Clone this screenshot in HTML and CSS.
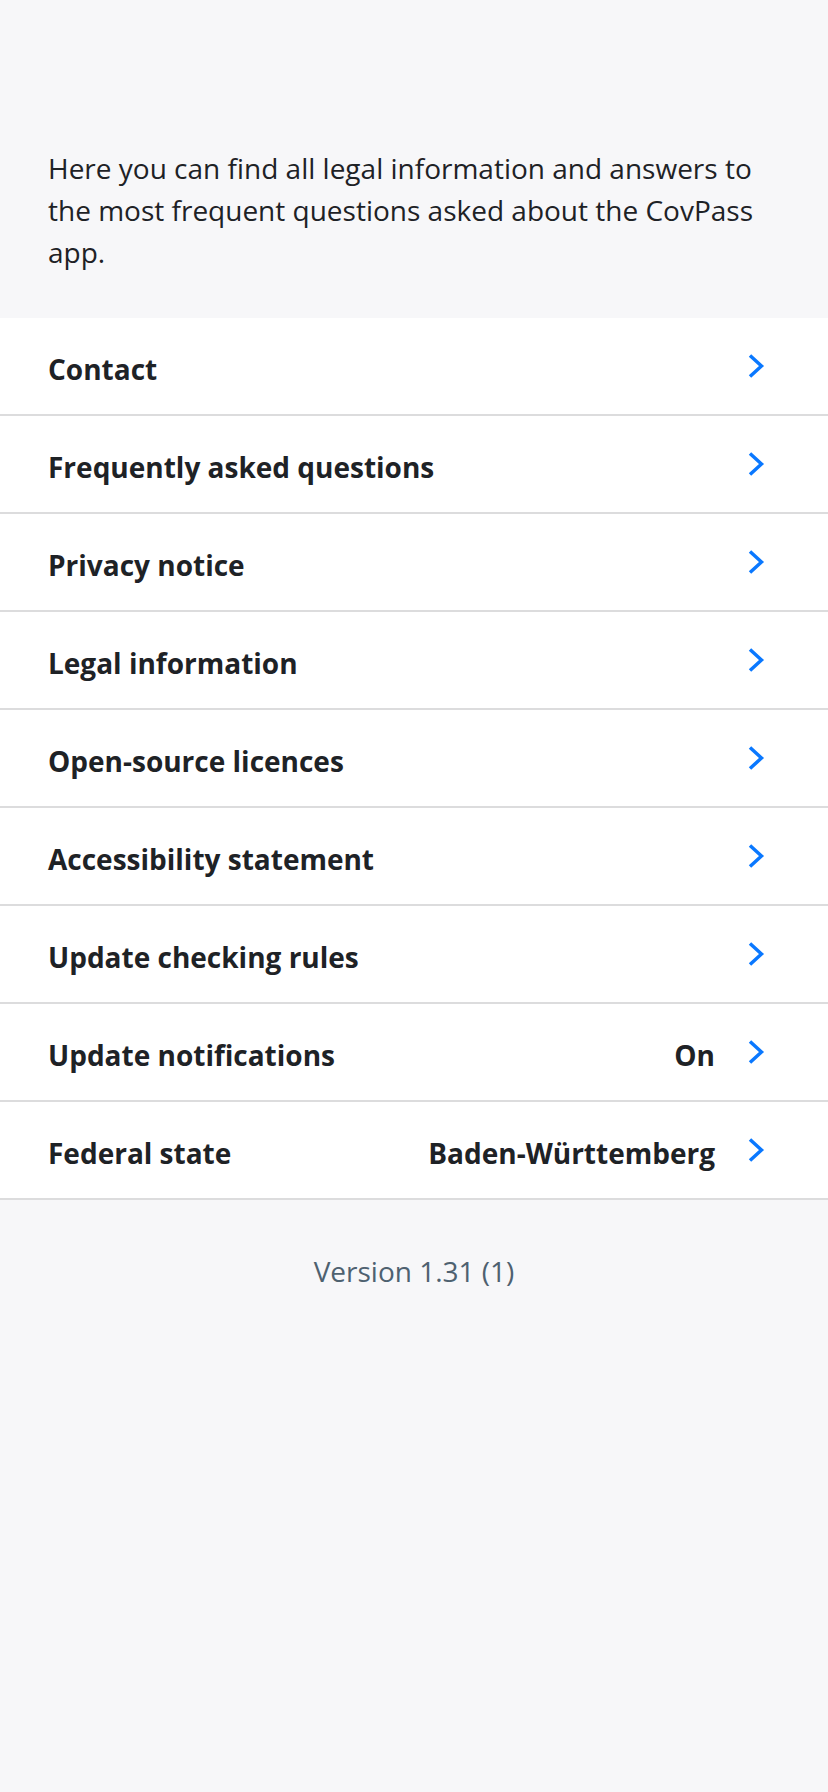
FILE: index.html
```html
<!DOCTYPE html>
<html lang="en">
<head>
<meta charset="utf-8">
<link rel="stylesheet" href="styles.css">
<title>Information</title>
</head>
<body>
<div class="page">
  <p class="intro">Here you can find all legal information and answers to the most frequent questions asked about the CovPass app.</p>
  <ul class="list">
    <li class="row"><span class="label">Contact</span><svg class="chev" viewBox="0 0 16 24"><path d="M2 1.5 L13.5 12 L2 22.5"/></svg></li>
    <li class="row"><span class="label">Frequently asked questions</span><svg class="chev" viewBox="0 0 16 24"><path d="M2 1.5 L13.5 12 L2 22.5"/></svg></li>
    <li class="row"><span class="label">Privacy notice</span><svg class="chev" viewBox="0 0 16 24"><path d="M2 1.5 L13.5 12 L2 22.5"/></svg></li>
    <li class="row"><span class="label">Legal information</span><svg class="chev" viewBox="0 0 16 24"><path d="M2 1.5 L13.5 12 L2 22.5"/></svg></li>
    <li class="row"><span class="label">Open-source licences</span><svg class="chev" viewBox="0 0 16 24"><path d="M2 1.5 L13.5 12 L2 22.5"/></svg></li>
    <li class="row"><span class="label">Accessibility statement</span><svg class="chev" viewBox="0 0 16 24"><path d="M2 1.5 L13.5 12 L2 22.5"/></svg></li>
    <li class="row"><span class="label">Update checking rules</span><svg class="chev" viewBox="0 0 16 24"><path d="M2 1.5 L13.5 12 L2 22.5"/></svg></li>
    <li class="row"><span class="label">Update notifications</span><span class="value">On</span><svg class="chev" viewBox="0 0 16 24"><path d="M2 1.5 L13.5 12 L2 22.5"/></svg></li>
    <li class="row"><span class="label">Federal state</span><span class="value">Baden-Württemberg</span><svg class="chev" viewBox="0 0 16 24"><path d="M2 1.5 L13.5 12 L2 22.5"/></svg></li>
  </ul>
  <p class="version">Version 1.31 (1)</p>
</div>
</body>
</html>
```

FILE: styles.css
```css
html, body {
  margin: 0;
  padding: 0;
  background: #f7f7f9;
}
body {
  font-family: "Open Sans", "Noto Sans", sans-serif;
  color: #1e2226;
  min-height: 1792px;
}
.page {
  display: flex;
  flex-direction: column;
}
.intro {
  margin: 0;
  padding: 147px 48px 45px 48px;
  font-size: 28px;
  line-height: 42px;
  color: #1e2226;
}
.list {
  list-style: none;
  margin: 0;
  padding: 0;
  background: #ffffff;
}
.row {
  display: flex;
  align-items: center;
  height: 96px;
  box-sizing: content-box;
  padding: 0 64px 0 48px;
  border-bottom: 2px solid #dcdcdd;
}
.label, .value {
  font-size: 28px;
  font-weight: 700;
  line-height: 38px;
  padding-top: 6px;
}
.label {
  flex: 1;
}
.value {
  margin-right: 33px;
}
.chev {
  width: 16px;
  height: 24px;
  flex: none;
}
.chev path {
  fill: none;
  stroke: #0a78ff;
  stroke-width: 3.5;
  stroke-linejoin: miter;
}
.version {
  margin: 52px 0 0 0;
  text-align: center;
  font-size: 28px;
  line-height: 38px;
  color: #4e6170;
}
```
